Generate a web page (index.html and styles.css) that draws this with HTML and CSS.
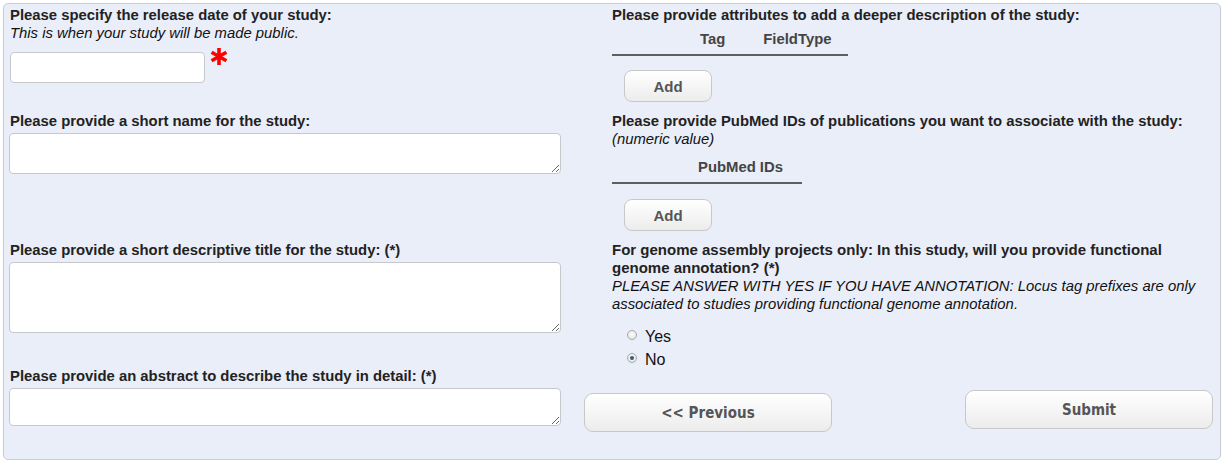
FILE: index.html
```html
<!DOCTYPE html>
<html>
<head>
<meta charset="utf-8">
<link rel="stylesheet" href="styles.css">
</head>
<body>
<form class="panel">
  <div class="cell left r1">
    <div class="label">Please specify the release date of your study:</div>
    <div class="hint">This is when your study will be made public.</div>
    <div class="date-row">
      <input class="date" type="text">
      <svg class="req" width="18" height="19" viewBox="0 0 18 19">
        <g stroke="#ff0000" stroke-width="3.6" stroke-linecap="butt">
          <line x1="9" y1="1" x2="9" y2="18"/>
          <line x1="1.6" y1="5.2" x2="16.4" y2="13.8"/>
          <line x1="1.6" y1="13.8" x2="16.4" y2="5.2"/>
        </g>
      </svg>
    </div>
  </div>
  <div class="cell right r1">
    <div class="label">Please provide attributes to add a deeper description of the study:</div>
    <div class="thead thead-attr"><span>Tag</span><span>FieldType</span></div>
    <button type="button" class="btn-add add1">Add</button>
  </div>

  <div class="cell left r2">
    <div class="label">Please provide a short name for the study:</div>
    <textarea class="ta ta-name"></textarea>
  </div>
  <div class="cell right r2">
    <div class="label">Please provide PubMed IDs of publications you want to associate with the study:</div>
    <div class="hint">(numeric value)</div>
    <div class="thead thead-pub"><span>PubMed IDs</span></div>
    <button type="button" class="btn-add add2">Add</button>
  </div>

  <div class="cell left r3">
    <div class="label">Please provide a short descriptive title for the study: (*)</div>
    <textarea class="ta ta-title"></textarea>
  </div>
  <div class="cell right r3 narrow">
    <div class="label label-big">For genome assembly projects only: In this study, will you provide functional genome annotation? (*)</div>
    <div class="hint">PLEASE ANSWER WITH YES IF YOU HAVE ANNOTATION: Locus tag prefixes are only associated to studies providing functional genome annotation.</div>
    <div class="radios">
      <label class="radio"><span class="dot"></span>Yes</label>
      <label class="radio"><span class="dot checked"></span>No</label>
    </div>
  </div>

  <div class="cell left r4">
    <div class="label">Please provide an abstract to describe the study in detail: (*)</div>
    <textarea class="ta ta-abstract"></textarea>
  </div>
  <div class="cell right-wide r4 actions">
    <button type="button" class="btn-nav prev">&lt;&lt; Previous</button>
    <button type="button" class="btn-nav submit">Submit</button>
  </div>
</form>
</body>
</html>
```

FILE: styles.css
```css
html, body {
  margin: 0;
  padding: 0;
  background: #ffffff;
}
body {
  padding: 3px 2px 0 3px;
  font-family: "Liberation Sans", Arial, sans-serif;
  color: #222222;
}
.panel {
  box-sizing: border-box;
  width: 1218px;
  height: 457px;
  background: #eaeef9;
  border: 1px solid #c9ccd4;
  border-radius: 5px;
  padding: 2px 7px 0 6px;
  display: grid;
  grid-template-columns: 574px 1fr;
  grid-template-rows: 106px 129px 126px auto;
}
.cell {
  min-width: 0;
}
.right {
  padding-left: 28px;
}
.narrow {
  padding-right: 12px;
}
.label {
  font-size: 14.85px;
  font-weight: bold;
  line-height: 18px;
  color: #222;
}
.label-big {
  font-size: 15px;
}
.hint {
  font-size: 14.85px;
  font-style: italic;
  line-height: 18px;
  color: #111;
}
.date-row {
  display: flex;
  align-items: flex-start;
  margin-top: 10px;
}
.date {
  box-sizing: border-box;
  width: 195px;
  height: 31px;
  border: 1px solid #c6c8cc;
  border-radius: 4px;
  background: #fff;
  margin: 0;
  padding: 2px 6px;
}
.req {
  margin-left: 5px;
  margin-top: -5px;
}
.ta {
  display: block;
  box-sizing: border-box;
  width: 552px;
  margin: 3px 0 0 -1px;
  border: 1px solid #c6c8cc;
  border-radius: 4px;
  background: #fff;
  padding: 2px;
  font-family: "Liberation Sans", Arial, sans-serif;
}
.ta-name { height: 41px; }
.ta-title { height: 71px; }
.ta-abstract { height: 38px; }

.thead {
  box-sizing: border-box;
  display: flex;
  font-size: 14.85px;
  font-weight: bold;
  line-height: 18px;
  color: #444444;
  border-bottom: 2px solid #5e5e5e;
}
.thead-attr {
  width: 236px;
  margin-top: 6px;
  padding: 0 0 6px 88px;
  gap: 38px;
}
.thead-pub {
  width: 190px;
  margin-top: 10px;
  padding: 0 0 6px 86px;
}
.btn-add {
  display: block;
  box-sizing: border-box;
  width: 88px;
  height: 32px;
  margin-left: 12px;
  border: 1px solid #c8c8c8;
  border-radius: 8px;
  background: linear-gradient(#ffffff, #ececec);
  font-family: "Liberation Sans", Arial, sans-serif;
  font-size: 15px;
  font-weight: bold;
  color: #555555;
  padding: 0;
}
.add1 { margin-top: 14px; }
.add2 { margin-top: 15px; }

.radios {
  margin-top: 12px;
  padding-left: 15px;
}
.radio {
  display: flex;
  align-items: center;
  font-size: 16px;
  line-height: 23px;
  color: #111;
}
.dot {
  box-sizing: border-box;
  width: 10px;
  height: 10px;
  border-radius: 50%;
  border: 1px solid #a9a9a9;
  background: radial-gradient(circle at 50% 40%, #ffffff, #dcdcdc);
  margin-right: 8px;
  margin-top: -3px;
  position: relative;
}
.dot.checked::after {
  content: "";
  position: absolute;
  left: 2px;
  top: 2px;
  width: 4px;
  height: 4px;
  border-radius: 50%;
  background: #2f5d80;
}

.actions {
  display: flex;
  justify-content: space-between;
  align-items: flex-start;
}
.btn-nav {
  box-sizing: border-box;
  width: 248px;
  height: 39px;
  border: 1px solid #c8c8c8;
  border-radius: 9px;
  background: linear-gradient(#ffffff, #ececec);
  font-family: "DejaVu Sans Condensed", "DejaVu Sans", sans-serif;
  font-stretch: condensed;
  font-size: 15px;
  font-weight: bold;
  color: #555555;
  padding: 0;
}
.prev { margin-top: 26px; }
.submit { margin-top: 23px; }
```
